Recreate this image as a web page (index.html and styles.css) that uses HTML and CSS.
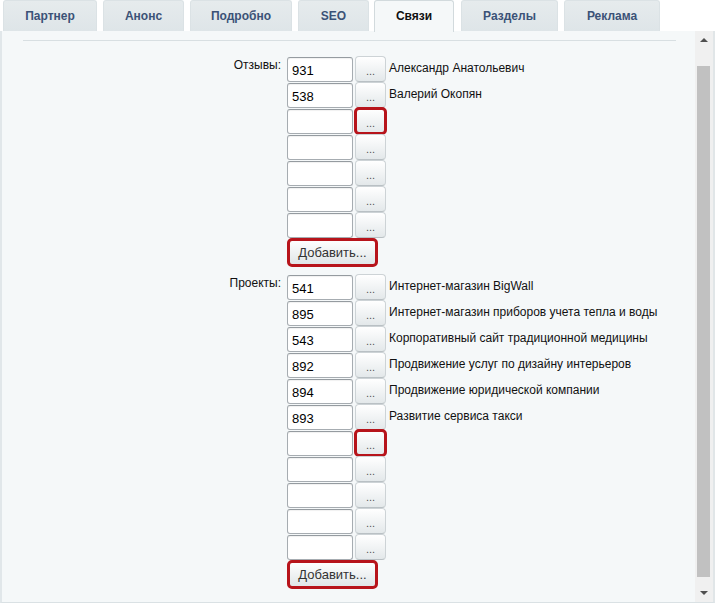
FILE: index.html
```html
<!DOCTYPE html>
<html lang="ru">
<head>
<meta charset="utf-8">
<title>Связи</title>
<link rel="stylesheet" href="styles.css">
</head>
<body>
<div class="tabs">
  <div class="tab">Партнер</div>
  <div class="tab">Анонс</div>
  <div class="tab">Подробно</div>
  <div class="tab">SEO</div>
  <div class="tab tab-active">Связи</div>
  <div class="tab">Разделы</div>
  <div class="tab">Реклама</div>
</div>
<div class="panel">
  <div class="content">
    <div class="divider"></div>
    <div class="fields">
      <div class="label">Отзывы:</div>
      <div class="rows">
        <div class="row"><input class="id" value="931"><button class="pick">...</button><span class="name">Александр Анатольевич</span></div>
        <div class="row"><input class="id" value="538"><button class="pick">...</button><span class="name">Валерий Окопян</span></div>
        <div class="row"><input class="id" value=""><button class="pick marked">...</button></div>
        <div class="row"><input class="id" value=""><button class="pick">...</button></div>
        <div class="row"><input class="id" value=""><button class="pick">...</button></div>
        <div class="row"><input class="id" value=""><button class="pick">...</button></div>
        <div class="row"><input class="id" value=""><button class="pick">...</button></div>
        <button class="add marked">Добавить...</button>
      </div>

      <div class="label group">Проекты:</div>
      <div class="rows group">
        <div class="row"><input class="id" value="541"><button class="pick">...</button><span class="name">Интернет-магазин BigWall</span></div>
        <div class="row"><input class="id" value="895"><button class="pick">...</button><span class="name">Интернет-магазин приборов учета тепла и воды</span></div>
        <div class="row"><input class="id" value="543"><button class="pick">...</button><span class="name">Корпоративный сайт традиционной медицины</span></div>
        <div class="row"><input class="id" value="892"><button class="pick">...</button><span class="name">Продвижение услуг по дизайну интерьеров</span></div>
        <div class="row"><input class="id" value="894"><button class="pick">...</button><span class="name">Продвижение юридической компании</span></div>
        <div class="row"><input class="id" value="893"><button class="pick">...</button><span class="name">Развитие сервиса такси</span></div>
        <div class="row"><input class="id" value=""><button class="pick marked">...</button></div>
        <div class="row"><input class="id" value=""><button class="pick">...</button></div>
        <div class="row"><input class="id" value=""><button class="pick">...</button></div>
        <div class="row"><input class="id" value=""><button class="pick">...</button></div>
        <div class="row"><input class="id" value=""><button class="pick">...</button></div>
        <button class="add marked">Добавить...</button>
      </div>
    </div>
  </div>
  <div class="scrollbar">
    <div class="arrow"><span class="tri tri-up"></span></div>
    <div class="track"><div class="thumb"></div></div>
    <div class="arrow"><span class="tri tri-down"></span></div>
  </div>
</div>
</body>
</html>
```
FILE: styles.css
```css
html, body {
  margin: 0;
  padding: 0;
  background: #ffffff;
}

body {
  width: 715px;
  font-family: "Liberation Sans", Arial, sans-serif;
  font-size: 12px;
  color: #000;
}

/* tab strip */
.tabs {
  display: flex;
  align-items: flex-end;
  height: 31px;
  padding-left: 3px;
  gap: 6px;
}

.tab {
  box-sizing: border-box;
  height: 31px;
  line-height: 31px;
  text-align: center;
  font-weight: bold;
  font-size: 12px;
  color: #3b5277;
  background: linear-gradient(#e6ebed, #dee5e8);
  border: 1px solid #dbe2e5;
  border-bottom: none;
  border-radius: 3px 3px 0 0;
}

.tab:nth-child(1) { width: 94px; }
.tab:nth-child(2) { width: 81px; }
.tab:nth-child(3) { width: 102px; }
.tab:nth-child(4) { width: 71px; }
.tab:nth-child(5) { width: 80px; margin-left: -1px; }
.tab:nth-child(6) { width: 97px; margin-left: 1px; }
.tab:nth-child(7) { width: 96px; }

.tab-active {
  height: 32px;
  margin-bottom: -1px;
  color: #111;
  background: #f5f8f9;
  border-color: #d2dadd;
}

/* content panel */
.panel {
  box-sizing: border-box;
  display: flex;
  height: 572px;
  background: #f5f8f9;
  border-left: 2px solid #e1e7ea;
  border-right: 2px solid #e1e6e8;
  border-bottom: 1px solid #dae1e4;
}

.content {
  flex: 1;
  min-width: 0;
}

.divider {
  height: 1px;
  margin: 9px 19px 0 21px;
  background: #d8dfe2;
}

.fields {
  display: grid;
  grid-template-columns: 279px auto;
  column-gap: 6px;
  margin-top: 15px;
}

.label {
  text-align: right;
  line-height: 14px;
  padding-top: 2px;
  font-size: 12px;
  color: #111;
}

.group {
  margin-top: 8px;
}

.rows {
  display: flex;
  flex-direction: column;
  align-items: flex-start;
}

.row {
  display: flex;
  align-items: flex-start;
  height: 26px;
}

.id {
  box-sizing: border-box;
  width: 66px;
  height: 25px;
  margin: 1px 0 0 0;
  padding: 2px 4px 0;
  border: 1px solid #a6acb1;
  border-top-color: #959ba0;
  border-radius: 3px;
  background: #fff;
  box-shadow: inset 0 1px 1px rgba(0, 0, 0, 0.06);
  font-family: "Liberation Sans", Arial, sans-serif;
  font-size: 13px;
  color: #000;
  outline: none;
}

.pick {
  box-sizing: border-box;
  width: 31px;
  height: 26px;
  margin-left: 2px;
  padding: 4px 0 0;
  border: 1px solid #cdd3d6;
  border-bottom-color: #b9c0c4;
  border-radius: 4px;
  background: linear-gradient(#ffffff, #e3e8ea);
  font-family: "Liberation Sans", Arial, sans-serif;
  font-size: 11px;
  color: #555;
  line-height: 14px;
}

.name {
  margin-left: 3px;
  padding-top: 5px;
  line-height: 14px;
  font-size: 12px;
  color: #111;
  white-space: nowrap;
}

.add {
  box-sizing: border-box;
  width: 89px;
  height: 27px;
  margin: 1px 0 0 1px;
  padding: 0;
  border: 1px solid #c3c9cc;
  border-bottom-color: #aeb5b9;
  border-radius: 4px;
  background: linear-gradient(#ffffff, #dfe5e7);
  font-family: "Liberation Sans", Arial, sans-serif;
  font-size: 13px;
  color: #333;
}

.marked {
  outline: 3px solid #b7141b;
  outline-offset: -2px;
}

/* vertical scrollbar */
.scrollbar {
  width: 18px;
  display: flex;
  flex-direction: column;
  background: #f0f0f0;
}

.arrow {
  height: 18px;
  display: flex;
  align-items: center;
  justify-content: center;
  padding-right: 1px;
}

.tri {
  width: 0;
  height: 0;
  border-left: 4px solid transparent;
  border-right: 4px solid transparent;
}

.tri-up {
  border-bottom: 4px solid #505050;
}

.tri-down {
  border-top: 4px solid #505050;
}

.track {
  flex: 1;
  padding-top: 17px;
}

.thumb {
  width: 13px;
  height: 511px;
  margin-left: 2px;
  background: #c1c1c1;
}
```
